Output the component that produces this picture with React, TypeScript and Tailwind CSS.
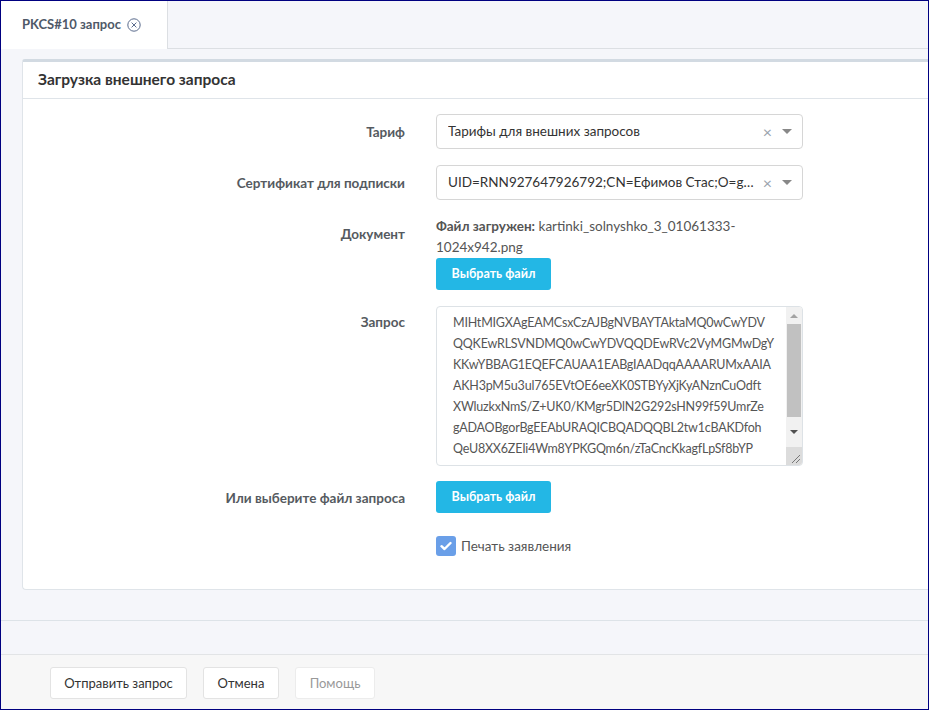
import React from "react";

const font = { fontFamily: "Lato, 'Noto Sans', sans-serif" };

const requestLines = [
  "MIHtMIGXAgEAMCsxCzAJBgNVBAYTAktaMQ0wCwYDV",
  "QQKEwRLSVNDMQ0wCwYDVQQDEwRVc2VyMGMwDgY",
  "KKwYBBAG1EQEFCAUAA1EABgIAADqqAAAARUMxAAIA",
  "AKH3pM5u3ul765EVtOE6eeXK0STBYyXjKyANznCuOdft",
  "XWluzkxNmS/Z+UK0/KMgr5DlN2G292sHN99f59UmrZe",
  "gADAOBgorBgEEAbURAQICBQADQQBL2tw1cBAKDfoh",
  "QeU8XX6ZEIi4Wm8YPKGQm6n/zTaCncKkagfLpSf8bYP",
];

function FormRow({ label, children, labelPad = "pt-[8px]" }: { label: string; children: React.ReactNode; labelPad?: string }) {
  return (
    <div className="flex gap-[31px]">
      <div className={`w-[367px] shrink-0 text-right text-[13.5px] leading-[20px] font-bold text-[#555a60] ${labelPad}`}>
        {label}
      </div>
      <div className="w-[367px]">{children}</div>
    </div>
  );
}

function SelectBox({ value }: { value: string }) {
  return (
    <div className="h-[35px] border border-[#d6d6d6] rounded-[4px] bg-white flex items-center pl-[11px] pr-[10px]">
      <span className="flex-1 truncate text-[13.5px] text-[#333]">{value}</span>
      <span className="ml-[8px] text-[16px] leading-none text-[#9aa3ad]">×</span>
      <span className="ml-[10px] w-0 h-0 border-l-[5px] border-r-[5px] border-t-[5px] border-l-transparent border-r-transparent border-t-[#888]" />
    </div>
  );
}

function InfoButton() {
  return (
    <button className="h-[32px] w-[115px] rounded-[3px] bg-[#23b7e5] text-white text-[12.5px] font-bold">
      Выбрать файл
    </button>
  );
}

function FakeScrollbar() {
  return (
    <div className="w-[16px] bg-[#f1f1f1] flex flex-col">
      <div className="h-[17px] flex items-center justify-center">
        <span className="w-0 h-0 border-l-[4px] border-r-[4px] border-b-[4px] border-l-transparent border-r-transparent border-b-[#a3a3a3]" />
      </div>
      <div className="mx-[1px] h-[93px] bg-[#c1c1c1]" />
      <div className="flex-1 flex items-center justify-center">
        <span className="w-0 h-0 border-l-[4px] border-r-[4px] border-t-[4px] border-l-transparent border-r-transparent border-t-[#505050]" />
      </div>
      <div className="h-[18px] bg-[#dcdcdc] relative overflow-hidden">
        <svg width="16" height="18" viewBox="0 0 16 18" className="absolute inset-0">
          <line x1="6" y1="16" x2="14" y2="8" stroke="#777" strokeWidth="1" />
          <line x1="10" y1="16" x2="14" y2="12" stroke="#777" strokeWidth="1" />
        </svg>
      </div>
    </div>
  );
}

export default function App() {
  return (
    <div style={font} className="w-[929px] h-[710px] border border-[#000080] bg-[#f5f6fa] flex flex-col overflow-hidden text-[#333]">
      {/* tabs */}
      <div className="h-[48px] shrink-0 border-b border-[#dcdfe3] flex">
        <div className="w-[167px] -mb-px bg-white border-r border-[#dcdfe3] flex items-center pl-[21px] gap-[6px]">
          <span className="text-[13px] font-bold text-[#4f5968]">PKCS#10 запрос</span>
          <svg width="14" height="14" viewBox="0 0 14 14">
            <circle cx="7" cy="7" r="6.2" fill="none" stroke="#5a6b8c" strokeWidth="1" />
            <path d="M4.6 4.6 L9.4 9.4 M9.4 4.6 L4.6 9.4" stroke="#5a6b8c" strokeWidth="1" />
          </svg>
        </div>
      </div>

      {/* content */}
      <div className="pt-[10px] pl-[21px] shrink-0">
        <div className="bg-white border-t-[3px] border-t-[#d2dae2] border-l border-b border-[#dfe4e9] rounded-bl-[4px] rounded-tl-[3px]">
          <div className="h-[37px] border-b border-[#dfe4e9] flex items-center pl-[15px] text-[15.5px] font-bold text-[#333]">
            Загрузка внешнего запроса
          </div>
          <div className="pt-[15px] pb-[33px] pl-[15px] flex flex-col">
            <FormRow label="Тариф">
              <SelectBox value="Тарифы для внешних запросов" />
            </FormRow>
            <div className="h-[16px]" />
            <FormRow label="Сертификат для подписки">
              <SelectBox value="UID=RNN927647926792;CN=Ефимов Стас;O=gamma;C=KZ" />
            </FormRow>
            <div className="h-[16px]" />
            <FormRow label="Документ">
              <div className="text-[13.5px] leading-[21px] text-[#555]">
                <span className="font-bold">Файл загружен:</span> kartinki_solnyshko_3_01061333-1024x942.png
              </div>
              <InfoButton />
            </FormRow>
            <div className="h-[16px]" />
            <FormRow label="Запрос" labelPad="pt-[6px]">
              <div className="h-[160px] border border-[#dde2e6] rounded-[4px] flex overflow-hidden">
                <div className="flex-1 pl-[16px] pt-[5px] text-[12.5px] tracking-[-0.2px] leading-[21px] text-[#555] whitespace-nowrap overflow-hidden">
                  {requestLines.map((l, i) => (
                    <div key={i}>{l}</div>
                  ))}
                </div>
                <FakeScrollbar />
              </div>
            </FormRow>
            <div className="h-[15px]" />
            <FormRow label="Или выберите файл запроса" labelPad="pt-[7px]">
              <InfoButton />
            </FormRow>
            <div className="h-[23px]" />
            <FormRow label="">
              <div className="flex items-center gap-[5px]">
                <span className="w-[20px] h-[20px] rounded-[3px] bg-[#6a9fe8] flex items-center justify-center">
                  <svg width="12" height="10" viewBox="0 0 12 10">
                    <path d="M1.5 5.2 L4.5 8 L10.5 2" fill="none" stroke="white" strokeWidth="2.4" strokeLinecap="round" strokeLinejoin="round" />
                  </svg>
                </span>
                <span className="text-[13.5px] text-[#555]">Печать заявления</span>
              </div>
            </FormRow>
          </div>
        </div>
      </div>

      <div className="h-[31px] shrink-0 border-b border-[#dde3e8]" />
      <div className="h-[34px] shrink-0 border-b border-[#e2e4e6]" />

      {/* footer */}
      <div className="flex-1 bg-[#f7f7f7] flex items-start gap-[16px] pl-[49px] pt-[12px]">
        <button className="h-[32px] w-[137px] bg-white border border-[#e3e3e3] rounded-[3px] text-[13px] text-[#333]">
          Отправить запрос
        </button>
        <button className="h-[32px] w-[76px] bg-white border border-[#e3e3e3] rounded-[3px] text-[13px] text-[#333]">
          Отмена
        </button>
        <button className="h-[32px] w-[80px] bg-white border border-[#ececec] rounded-[3px] text-[13px] text-[#999]">
          Помощь
        </button>
      </div>
    </div>
  );
}
